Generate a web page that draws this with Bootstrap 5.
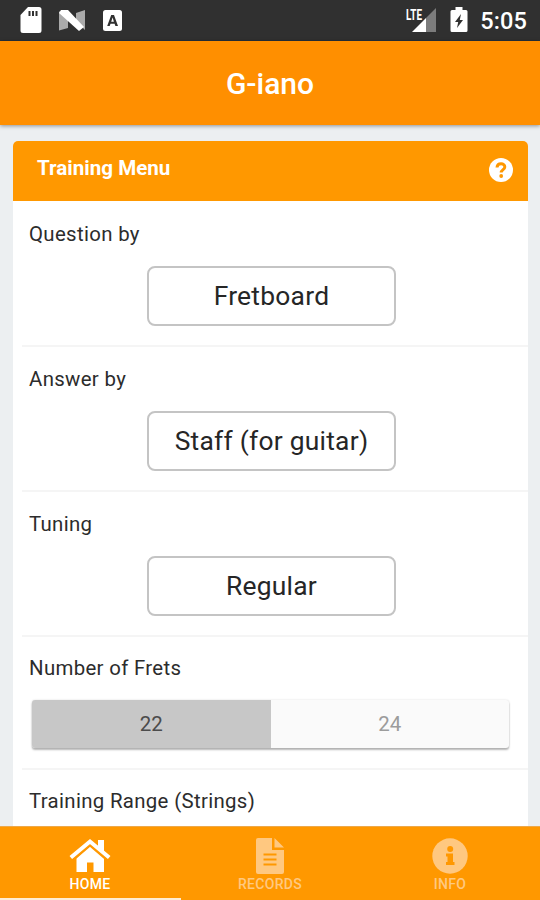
<!DOCTYPE html>
<html lang="en">
<head>
<meta charset="utf-8">
<meta name="viewport" content="width=device-width, initial-scale=1">
<title>G-iano</title>
<link href="https://cdn.jsdelivr.net/npm/bootstrap@5.3.0/dist/css/bootstrap.min.css" rel="stylesheet">
<style>
body { font-family: Roboto, "Liberation Sans", sans-serif; background: #eceff1; color: #2c2c2c; }
svg { display: block; flex: none; }
.app { height: 900px; width: 540px; }
.status { height: 41px; background: #303030; padding: 0 13px 0 19px; border-bottom: 1px solid #26303a; }
.clock { font-size: 23.5px; font-weight: 500; line-height: 41px; padding-top: 2px; letter-spacing: .1px; }
.appbar { height: 84px; background: #ff8f00; box-shadow: 0 1px 4px rgba(0,0,0,.4); z-index: 1; font-size: 30px; font-weight: 500; }
.content { min-height: 0; padding: 16px 12px 0 13px; }
.menu-card { border-radius: 5px 5px 0 0; }
.menu-head { height: 60px; background: #ff9800; padding: 0 14px 5px 24px; font-size: 20.6px; font-weight: 700; border-radius: 5px 5px 0 0; }
.menu-head svg { margin-top: 2px; }
.opt { height: 145px; margin-left: 9px; padding: 0 9px 0 7px; border-bottom: 2px solid #f5f5f5; }
.opt.first { height: 146px; padding-top: 1px; }
.opt.frets { height: 133px; }
.opt-label { font-size: 20.4px; line-height: 30px; padding-top: 17px; letter-spacing: .33px; }
.frets .opt-label, .frets + .opt .opt-label { padding-top: 16px; }
.picker { width: 249px; height: 60px; margin: 17px 0 0 118px; padding: 0; border: 2px solid #c4c4c4; border-radius: 8px; background: #fff; font-size: 26.4px; line-height: 55px; color: #262626; letter-spacing: .25px; }
.seg { margin: 17px 10px 0 3px; height: 48px; border-radius: 3px; box-shadow: 0 2px 2px rgba(0,0,0,.28), 0 0 2px rgba(0,0,0,.15); font-size: 20.5px; background: #fafafa; color: #9c9c9c; }
.seg .on { background: #c7c7c7; color: #4c4c4c; border-radius: 3px 0 0 3px; }
.tabs { height: 74px; background: #ff9800; font-size: 14px; font-weight: 500; line-height: 14px; letter-spacing: .3px; border-top: 1px solid #eda84a; z-index: 1; }
.tab-item { padding-top: 10px; color: #ffc880; }
.tab-item span { margin-top: 3px; }
.tab-item.current { color: #fff; }
.underbar { height: 2px; width: 181px; background: #ffedd2; }
</style>
</head>
<body>
<div class="app d-flex flex-column overflow-hidden">
  <div class="status d-flex align-items-center text-white flex-shrink-0">
    <svg width="24" height="28" viewBox="0 0 24 28"><path fill="#fff" d="M9 1h11a2.500 2.500 0 0 1 2.500 2.500v21A2.500 2.500 0 0 1 20 27H4a2.500 2.500 0 0 1-2.500-2.500V9z"/><path stroke="#303030" stroke-width="2" d="M10.500 5v5M14 5v5M17.500 5v5"/></svg>
    <svg class="ms-3" width="27" height="23" viewBox="0 0 27 23"><path fill="#aaa" d="M0 2l9 9v8l-9 2.500zM26 1v20l-9-9V4z"/><path fill="#fff" d="M2 1h7l16 17-5 4L0 4z"/></svg>
    <svg class="ms-3" width="22" height="23" viewBox="0 0 22 23"><rect x="1" y="1" width="19" height="21" rx="2.500" fill="#fff"/><path fill="#303030" fill-rule="evenodd" d="M9.200 6h2.800l4 11h-2.600l-.8-2.300H8.500L7.700 17H5.200zM9.200 12.700h2.700L10.600 8.500z"/></svg>
    <svg class="ms-auto" width="32" height="28" viewBox="0 0 32 28"><path fill="#7c7c7c" d="M30 2v24H20V12z"/><path fill="#fff" d="M20 12v14H6z"/><text x="0" y="13.500" font-size="15" font-weight="700" textLength="16" lengthAdjust="spacingAndGlyphs" fill="#fff" stroke="#303030" stroke-width="1.500" paint-order="stroke">LTE</text></svg>
    <svg width="18" height="26" viewBox="0 0 18 26" style="margin-left:12px"><path fill="#fff" d="M5.500 0h7v3H16a1.500 1.500 0 0 1 1.500 1.500v19A1.500 1.500 0 0 1 16 25H2a1.500 1.500 0 0 1-1.500-1.500v-19A1.500 1.500 0 0 1 2 3h3.500z"/><path fill="#303030" d="M11 7l-6 8h3.200L7 21l6-8H9.800z"/></svg>
    <div class="clock ms-2 ps-1">5:05</div>
  </div>
  <header class="appbar d-flex align-items-center justify-content-center text-white flex-shrink-0 position-relative">G-iano</header>
  <main class="content flex-fill overflow-hidden">
    <section class="menu-card bg-white h-100">
      <div class="menu-head d-flex align-items-center justify-content-between text-white">
        <span>Training Menu</span>
        <svg width="26" height="26" viewBox="0 0 26 26"><circle cx="13" cy="13" r="12" fill="#fff"/><path fill="none" stroke="#ff9800" stroke-width="3" d="M9 10.500C9.300 5.500 17 5.800 16.800 10c-.1 2.600-3.600 2.600-3.600 5.600"/><circle cx="13.200" cy="19" r="1.900" fill="#ff9800"/></svg>
      </div>
      <div class="opt first"><div class="opt-label">Question by</div><button class="picker btn d-block">Fretboard</button></div>
      <div class="opt"><div class="opt-label">Answer by</div><button class="picker btn d-block">Staff (for guitar)</button></div>
      <div class="opt"><div class="opt-label">Tuning</div><button class="picker btn d-block">Regular</button></div>
      <div class="opt frets"><div class="opt-label">Number of Frets</div>
        <div class="seg row g-0 text-center"><div class="col on d-flex align-items-center justify-content-center">22</div><div class="col d-flex align-items-center justify-content-center">24</div></div>
      </div>
      <div class="opt border-0"><div class="opt-label">Training Range (Strings)</div></div>
    </section>
  </main>
  <nav class="tabs flex-shrink-0 d-flex flex-column">
    <div class="row g-0 flex-fill">
      <div class="col tab-item current d-flex flex-column align-items-center">
        <svg width="42" height="37" viewBox="0 0 42 37"><path fill="#fff" d="M21 9L35 21v14H24.500v-9.500h-6.500V35H7.500V21z"/><path fill="none" stroke="#ff9800" stroke-width="1.500" d="M3.500 24L21 9l17.500 15"/><path fill="none" stroke="#fff" stroke-width="4" d="M1.800 20.500L21 4.500l19.200 16"/><path fill="#fff" d="M29 3h6v12l-6-5z"/></svg>
        <span>HOME</span>
      </div>
      <div class="col tab-item d-flex flex-column align-items-center">
        <svg width="30" height="37" viewBox="0 0 30 37"><path fill="currentColor" d="M3 1h14v12h12v22a2 2 0 0 1-2 2H3a2 2 0 0 1-2-2V3a2 2 0 0 1 2-2zM19.500 1L29 10.500h-9.500z"/><path stroke="#ff9800" stroke-width="2" d="M8.500 17.500h13M8.500 22.500h13M8.500 27.500h13"/></svg>
        <span>RECORDS</span>
      </div>
      <div class="col tab-item d-flex flex-column align-items-center">
        <svg width="36" height="37" viewBox="0 0 36 37"><circle cx="18" cy="19" r="17.700" fill="currentColor"/><circle cx="18.200" cy="12" r="3" fill="#ff9800"/><path fill="#ff9800" d="M14 16.500h7v8.500h1.500v3H14v-3h1.500v-5.500H14z"/></svg>
        <span>INFO</span>
      </div>
    </div>
    <div class="underbar"></div>
  </nav>
</div>
<script src="https://cdn.jsdelivr.net/npm/bootstrap@5.3.0/dist/js/bootstrap.bundle.min.js"></script>
</body>
</html>
